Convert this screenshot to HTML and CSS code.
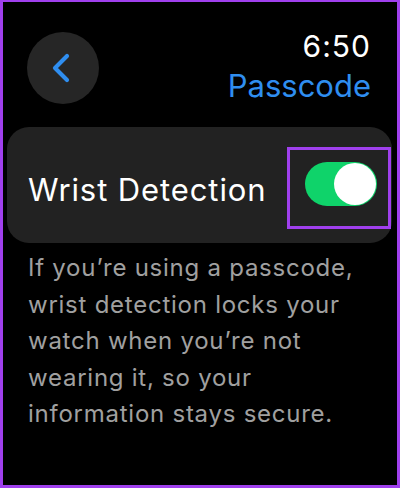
FILE: index.html
```html
<!DOCTYPE html>
<html>
<head>
<meta charset="utf-8">
<link rel="stylesheet" href="styles.css">
</head>
<body>
<div class="frame">
  <header class="header">
    <div class="back">
      <svg width="20" height="30" viewBox="0 0 20 30"><path d="M16 3 L4 15 L16 27" fill="none" stroke="#2f8ef0" stroke-width="4.2" stroke-linecap="round" stroke-linejoin="round"/></svg>
    </div>
    <div class="titles">
      <div class="time">6:50</div>
      <div class="title">Passcode</div>
    </div>
  </header>
  <section class="card">
    <span class="label">Wrist Detection</span>
    <div class="highlight">
      <div class="toggle"><div class="knob"></div></div>
    </div>
  </section>
  <p class="desc">If you’re using a passcode, wrist detection locks your watch when you’re not wearing it, so your information stays secure.</p>
</div>
</body>
</html>
```
FILE: styles.css
```css
* { box-sizing: border-box; }
html, body { margin: 0; padding: 0; background: #000; }
.frame {
  width: 400px;
  height: 488px;
  border: 3px solid #a040ee;
  border-top-width: 2px;
  background: #000;
  font-family: Inter, "Open Sans", sans-serif;
  overflow: hidden;
}
.header {
  display: flex;
  justify-content: space-between;
  padding: 26px 26px 0 24px;
}
.back {
  width: 72px;
  height: 72px;
  margin-top: 4px;
  border-radius: 50%;
  background: #262626;
  display: flex;
  align-items: center;
  justify-content: center;
  padding-right: 4px;
}
.titles {
  display: flex;
  flex-direction: column;
  align-items: flex-end;
}
.time {
  color: #fff;
  font-size: 30px;
  line-height: 36px;
  letter-spacing: 1px;
}
.title {
  color: #2f8ef0;
  font-size: 31px;
  line-height: 40px;
  margin-top: 2px;
  letter-spacing: 0;
}
.card {
  margin: 21px 5px 0 4px;
  height: 116px;
  border-radius: 22px;
  background: #222222;
  display: flex;
  align-items: center;
  justify-content: space-between;
  padding-left: 21px;
}
.label {
  color: #fff;
  font-size: 31px;
  letter-spacing: 0.9px;
  padding-top: 8px;
}
.highlight {
  width: 104px;
  height: 82px;
  margin-top: 6px;
  border: 3px solid #a040ee;
  padding: 12px 11px 0 15px;
  margin-right: 1px;
}
.toggle {
  width: 72px;
  height: 44px;
  border-radius: 22px;
  background: #0fd36a;
  position: relative;
}
.knob {
  position: absolute;
  right: 1px;
  top: 1px;
  width: 42px;
  height: 42px;
  border-radius: 50%;
  background: #fff;
}
.desc {
  margin: 7px 20px 0 25px;
  color: #a0a0a0;
  font-size: 24px;
  line-height: 36.6px;
  letter-spacing: 0.75px;
}
```
